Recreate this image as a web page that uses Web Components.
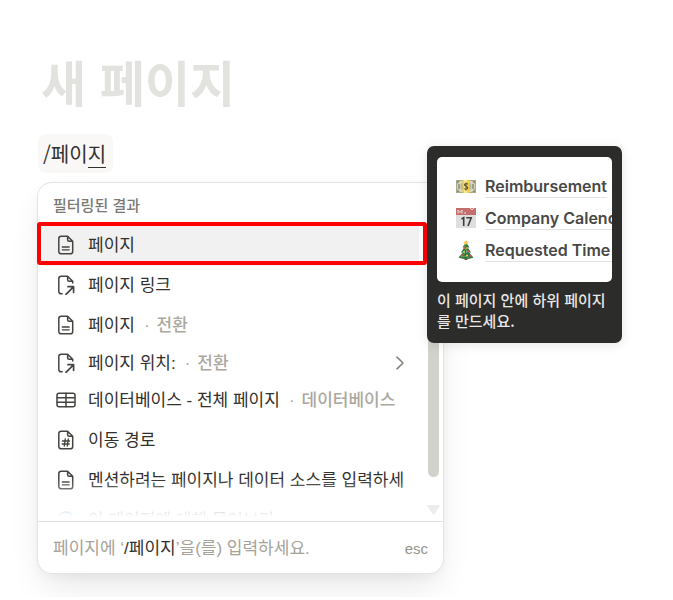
<!DOCTYPE html>
<html lang="ko">
<head>
<meta charset="utf-8">
<title>새 페이지</title>
<meta name="viewport" content="width=device-width, initial-scale=1">
<style>
html, body { margin: 0; min-height: 100%; background: #fff; }
body { font-family: "Noto Sans CJK KR", "Noto Sans", sans-serif; color: #373530; }
b { font-weight: inherit; color: #32302c; }
</style>
</head>
<body>
<note-editor>
  <span slot="title">새 페이지</span>
  <slash-command>/페이<u>지</u></slash-command>
  <slash-menu heading="필터링된 결과">
    <menu-item icon="page" active>페이지</menu-item>
    <menu-item icon="link">페이지 링크</menu-item>
    <menu-item icon="page" note="전환">페이지</menu-item>
    <menu-item icon="link" note="전환" submenu>페이지 위치:</menu-item>
    <menu-item icon="table" note="데이터베이스">데이터베이스 - 전체 페이지</menu-item>
    <menu-item icon="hash">이동 경로</menu-item>
    <menu-item icon="page">멘션하려는 페이지나 데이터 소스를 입력하세</menu-item>
    <menu-item icon="ask">이 페이지에 대해 물어보기</menu-item>
    <span slot="hint">페이지에 ‘<b>/페이지</b>’을(를) 입력하세요.</span>
    <preview-tip slot="tip">
      <tip-link icon="money">Reimbursement</tip-link>
      <tip-link icon="calendar">Company Calendar</tip-link>
      <tip-link icon="tree">Requested Time Off</tip-link>
      <span slot="caption">이 페이지 안에 하위 페이지를 만드세요.</span>
    </preview-tip>
  </slash-menu>
</note-editor>

<script>
const define = (name, html, setup) => {
  const template = document.createElement('template');
  template.innerHTML = html;
  customElements.define(name, class extends HTMLElement {
    constructor() {
      super();
      this.attachShadow({ mode: 'open' }).append(template.content.cloneNode(true));
    }
    connectedCallback() { if (setup) setup(this, this.shadowRoot); }
  });
};

const stroke = 'fill="none" stroke="currentColor" stroke-width="1.5" stroke-linejoin="round" stroke-linecap="round"';
const sheet = '<path d="M11.600 1.200H5.200A2.400 2.400 0 0 0 2.800 3.600V16.400A2.400 2.400 0 0 0 5.200 18.800H14.300A2.400 2.400 0 0 0 16.700 16.400V6.300L11.600 1.200V4.800A1.500 1.500 0 0 0 13.100 6.300H16.500"/>';
const icons = {
  page: `<g ${stroke}>${sheet}<path d="M6.300 12H13.200M6.300 14.800H13.200" stroke-width="1.300"/></g>`,
  hash: `<g ${stroke}>${sheet}<path d="M9.300 9 8.300 16M12.300 9 11.300 16M6.500 11H13.500M6.200 14H13.200" stroke-width="1.400"/></g>`,
  link: `<g ${stroke}><path d="M6.200 18.800H5.200A2.400 2.400 0 0 1 2.800 16.400V3.600A2.400 2.400 0 0 1 5.200 1.200H11.600L16.700 6.300V8M11.600 1.200V4.800A1.500 1.500 0 0 0 13.100 6.300H16.500"/><path d="M10 19.300 17.400 11.900M12 11.700H17.600V17.300" stroke-width="1.700"/></g>`,
  table: `<g ${stroke}><rect x="1" y="3.300" width="18" height="13.400" rx="2"/><path d="M1 7.700H19M1 12.200H19M10 3.300V16.700"/></g>`,
  ask: `<circle cx="9.800" cy="9.500" r="7.500" fill="none" stroke="#2383e2" stroke-width="1.600"/>`
};

define('note-editor', `
<style>
  :host { display: block; padding: 49px 38px 24px; }
  h1 { margin: 0 0 21px 3px; font-size: 49px; line-height: 64px; font-weight: 700; color: #e2e2df; }
</style>
<h1><slot name="title"></slot></h1>
<slot></slot>`);

define('slash-command', `
<style>
  :host { display: block; width: fit-content; padding: 0 7px 0 5px; border-radius: 8px; background: #f9f8f7; font-size: 20px; line-height: 39px; color: #32302c; }
  ::slotted(u) { text-decoration: none; background: linear-gradient(#32302c, #32302c) 0 100% / 100% 1px no-repeat; }
</style>
<slot></slot>`);

define('slash-menu', `
<style>
  :host { display: block; position: relative; max-width: 405px; margin-top: 10px; font-family: "Liberation Sans", "Noto Sans CJK KR", sans-serif; }
  .panel { display: flex; flex-direction: column; border-radius: 14px; background: #fff; box-shadow: 0 0 0 1px #e4e4e2, 0 18px 34px -6px rgba(0,0,0,.10), 0 4px 12px rgba(0,0,0,.04); }
  .body { display: flex; height: 338px; overflow-x: visible; overflow-y: clip; }
  .list { position: relative; flex: 1; min-width: 0; display: flex; flex-direction: column; }
  .list::after { content: ""; position: absolute; inset: auto 0 0; height: 42px; background: linear-gradient(rgba(255,255,255,0), #fff 38px); pointer-events: none; }
  h2 { margin: 0; padding: 11px 15px; font: 500 15px/21px "Noto Sans CJK KR", sans-serif; color: #7b7974; }
  .rail { display: flex; flex-direction: column; align-items: center; width: 19px; padding: 60px 0 6px; box-sizing: border-box; }
  .thumb { width: 11px; height: 234px; border-radius: 6px; background: #d2d2cc; }
  .down { margin-top: auto; width: 13px; height: 10px; fill: #ececea; }
  footer { display: flex; align-items: center; justify-content: space-between; height: 52px; padding: 2px 15px 0; box-sizing: border-box; border-top: 1px solid #e1e1df; font-size: 17px; line-height: 24px; color: #a5a299; }
  kbd { font: 15px/22px "Liberation Sans", sans-serif; color: #96948c; }
  ::slotted(span) { white-space: nowrap; }
</style>
<section class="panel">
  <div class="body">
    <div class="list"><h2></h2><slot></slot></div>
    <div class="rail"><div class="thumb"></div><svg class="down" viewBox="0 0 13 10"><path d="M1.500 0H11.500Q13.500 0 12.400 1.700L7.500 9Q6.500 10.300 5.500 9L.6 1.700Q-.5 0 1.500 0Z"/></svg></div>
  </div>
  <footer><slot name="hint"></slot><kbd>esc</kbd></footer>
</section>
<slot name="tip"></slot>`, (el, root) => {
  root.querySelector('h2').textContent = el.getAttribute('heading');
});

define('menu-item', `
<style>
  :host { display: block; flex: none; height: 40px; }
  :host([submenu]) { height: 35px; }
  :host([active]) { position: relative; }
  :host([active])::after { content: ""; position: absolute; inset: -4px -3px 1px -1px; border: 4px solid #fe0000; border-radius: 3px; }
  button { display: flex; align-items: center; width: 100%; height: 100%; padding: 0 8px 0 18px; border: 0; background: none; font: inherit; font-size: 17px; line-height: 24px; color: #32302c; text-align: left; white-space: nowrap; }
  :host([active]) button { background: linear-gradient(#f1f1f1, #f1f1f1) 5px 0 / 376px 100% no-repeat; }
  .icon { flex: none; width: 20px; height: 20px; margin: 0 12px 2px 0; color: #464440; }
  .dot { margin: 0 7px 0 9px; color: #aba8a0; }
  .note { color: #aba8a0; font-weight: 500; }
  .chevron { width: 10px; height: 14px; margin: 0 11px 2px auto; fill: none; stroke: #85837e; stroke-width: 1.600; stroke-linecap: round; stroke-linejoin: round; }
</style>
<button type="button"><svg class="icon" viewBox="0 0 20 20" aria-hidden="true"></svg><span><slot></slot></span></button>`, (el, root) => {
  root.querySelector('svg').innerHTML = icons[el.getAttribute('icon')];
  const button = root.querySelector('button');
  if (el.hasAttribute('note')) {
    for (const [name, text] of [['dot', '·'], ['note', el.getAttribute('note')]]) {
      const part = document.createElement('span');
      part.className = name;
      part.textContent = text;
      button.append(part);
    }
  }
  if (el.hasAttribute('submenu')) button.insertAdjacentHTML('beforeend', '<svg class="chevron" viewBox="0 0 10 14"><path d="M2 1.200 8 7 2 12.800"/></svg>');
});

define('preview-tip', `
<style>
  :host { position: absolute; left: 389px; top: -37px; width: 195px; box-sizing: border-box; padding: 11px 10px 12px; border-radius: 7px; background: #2c2c2b; box-shadow: 0 2px 12px rgba(0,0,0,.1); color: #e9e8e6; }
  .card { display: flex; flex-direction: column; height: 125px; padding: 13px 0 0 18px; box-sizing: border-box; border-radius: 5px; background: #fff; overflow: hidden; }
  p { margin: 7px 0 0; font: 500 15px/21px "Noto Sans CJK KR", sans-serif; }
</style>
<div class="card"><slot></slot></div>
<p><slot name="caption"></slot></p>`);

const pictures = {
  money: '<rect y="4" width="20" height="13" fill="#a9aa8d"/><rect x="1" y="5" width="18" height="11" fill="#d5d5bd"/><path d="M1 5h3L1 8zM19 5h-3l3 3zM1 16h3l-3-3zM19 16h-3l3-3z" fill="#8d8f71"/><ellipse cx="10" cy="10.500" rx="5.500" ry="5" fill="#b4b599"/><path d="M3 8v5M17 8v5" stroke="#898b70" stroke-width="1.500"/><path d="M6.500 4h7v13h-7z" fill="#f5cf45"/><path d="M8 4h3v13H8z" fill="#ffe88a"/><path d="M12 8.200Q10 6.800 8.500 8.300C7.700 11 12.500 9.700 11.700 12.300Q10 14 8 12.600M10 6.500v8" fill="none" stroke="#575333" stroke-width="1.100"/>',
  calendar: '<rect y="0" width="20" height="20" fill="#dededf"/><path d="M0 0h20v7H0z" fill="#c56c6d"/><path d="M2 5.500V2l2 2.500L6 2v3.500M8 5h2M14 0l2 2 2-2" fill="none" stroke="#eadada" stroke-width="1"/><path d="M5.500 11 7.700 9.700V18M10.300 9.800H15.200L12 18" fill="none" stroke="#3e3e3f" stroke-width="1.600"/>',
  tree: '<path d="M8.500 16h3v4h-3z" fill="#825136"/><path d="M10 2 6.500 7.500h1.700L5 12.500H7L2.500 17.500Q10 20.500 17.500 17.500L13 12.500h2L11.800 7.500h1.700Z" fill="#317642"/><path d="M10 2 8.500 8l1.500 1-3 3 2 1-4 4 5-1 3 2M11.500 7l-1.500 3 3 2" fill="none" stroke="#54a65b"/><path d="M10 0l.8 1.600 1.800.2-1.300 1.300.3 1.800L10 4l-1.600.9.3-1.800L7.400 1.800l1.800-.2z" fill="#f7c83c"/><g fill="#e35a44"><circle cx="8.500" cy="8" r="1"/><circle cx="12.500" cy="11" r="1"/><circle cx="6" cy="15.500" r="1"/><circle cx="14.500" cy="16" r="1"/></g><g fill="#f1d151"><circle cx="11" cy="8" r=".8"/><circle cx="8" cy="12" r=".9"/><circle cx="11" cy="15.500" r="1"/></g><circle cx="10.800" cy="12" r=".9" fill="#68abc7"/>'
};

define('tip-link', `
<style>
  :host { display: flex; align-items: center; gap: 9px; flex: none; height: 32px; margin-left: 1px; }
  svg { flex: none; width: 20px; height: 20px; }
  a { font: 600 16px/22px Inter, sans-serif; color: #494846; text-decoration: none; white-space: nowrap; border-bottom: 1px solid #e3e3e2; }
</style>
<svg viewBox="0 0 20 20" aria-hidden="true"></svg><a href="#"><slot></slot></a>`, (el, root) => {
  root.querySelector('svg').innerHTML = pictures[el.getAttribute('icon')];
});
</script>
</body>
</html>
